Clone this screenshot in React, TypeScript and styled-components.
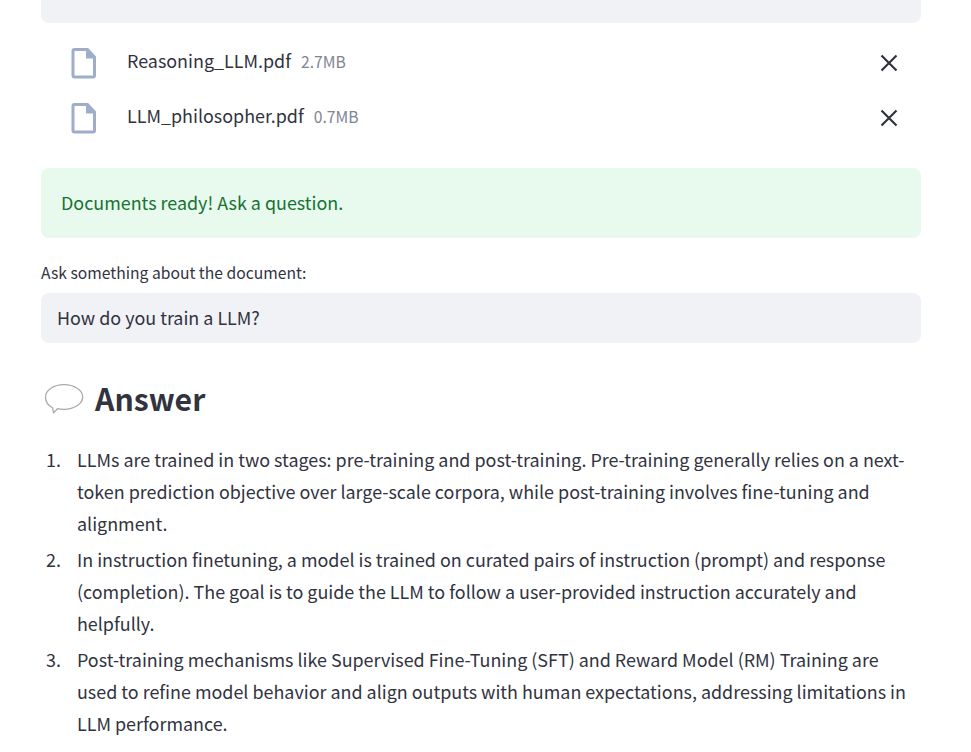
import { createGlobalStyle, styled } from 'styled-components';

const GlobalStyle = createGlobalStyle`
  html, body {
    margin: 0;
    padding: 0;
    background: #fff;
    overflow: hidden;
  }
  body {
    font-family: "Noto Sans CJK SC", "Noto Sans", sans-serif;
    color: #31333f;
  }
`;

const Page = styled.main`
  width: 971px;
  height: 752px;
  overflow: hidden;
  box-sizing: border-box;
  padding: 0 50px 0 41px;
`;

const DropZone = styled.div`
  height: 23px;
  background: #f0f2f6;
  border-radius: 0 0 8px 8px;
`;

const FileList = styled.div`
  display: flex;
  flex-direction: column;
  padding: 12px 0 0;
`;

const FileRow = styled.div`
  height: 55px;
  display: flex;
  align-items: center;
  padding-left: 30px;
`;

const FileIcon = styled.svg`
  width: 26px;
  height: 32px;
  flex: none;
  color: #9eadca;
`;

const FileName = styled.span`
  margin: -5px 0 0 30px;
  font-size: 17.92px;
  line-height: 28px;
`;

const FileSize = styled.span`
  margin: -1px 0 0 10px;
  font-size: 15.68px;
  line-height: 28px;
  color: #808495;
`;

const RemoveIcon = styled.svg`
  width: 24px;
  height: 24px;
  margin-left: auto;
  margin-right: 20px;
  flex: none;
`;

const Alert = styled.div`
  margin-top: 23px;
  height: 70px;
  display: flex;
  align-items: center;
  box-sizing: border-box;
  padding: 0 20px 2px;
  background: #e8f9ee;
  border-radius: 8px;
  color: #177233;
  font-size: 17.92px;
`;

const FieldLabel = styled.label`
  display: block;
  margin-top: 23px;
  height: 32px;
  font-size: 15.68px;
  line-height: 24px;
`;

const TextInput = styled.div`
  height: 50px;
  display: flex;
  align-items: center;
  box-sizing: border-box;
  padding: 0 16px 2px;
  background: #f0f2f6;
  border-radius: 8px;
  font-size: 17.92px;
`;

const Heading = styled.h3`
  margin: 29px 0 0;
  height: 52px;
  display: flex;
  align-items: center;
  font-size: 30.24px;
  line-height: 50px;
  font-weight: 600;
`;

const BubbleIcon = styled.svg`
  width: 40px;
  height: 32px;
  margin: 4px 11px 0 3px;
  flex: none;
`;

const AnswerList = styled.ol`
  margin: 19px 0 0;
  padding: 0;
  list-style: none;
  font-size: 17.92px;
  line-height: 32px;
`;

const AnswerItem = styled.li`
  display: grid;
  grid-template-columns: 36px 1fr;
  margin-bottom: 4px;
`;

const AnswerNumber = styled.span`
  padding-left: 5px;
`;

const files = [
  { name: 'Reasoning_LLM.pdf', size: '2.7MB' },
  { name: 'LLM_philosopher.pdf', size: '0.7MB' },
];

const answers = [
  'LLMs are trained in two stages: pre-training and post-training. Pre-training generally relies on a next-token prediction objective over large-scale corpora, while post-training involves fine-tuning and alignment.',
  'In instruction finetuning, a model is trained on curated pairs of instruction (prompt) and response (completion). The goal is to guide the LLM to follow a user-provided instruction accurately and helpfully.',
  'Post-training mechanisms like Supervised Fine-Tuning (SFT) and Reward Model (RM) Training are used to refine model behavior and align outputs with human expectations, addressing limitations in LLM performance.',
];

export default function App() {
  return (
    <Page>
      <GlobalStyle />
      <DropZone />
      <FileList>
        {files.map((file) => (
          <FileRow key={file.name}>
            <FileIcon viewBox="0 0 26 32" fill="none">
              <path d="M3.500 2.500h12.500l7.500 8v18a1.500 1.500 0 0 1-1.500 1.500H3.500a1.500 1.500 0 0 1-1.500-1.500V4a1.500 1.500 0 0 1 1.500-1.500z" stroke="currentColor" strokeWidth="3" strokeLinejoin="round" />
              <path d="M15 1h2l8 8.500v2H15z" fill="currentColor" />
            </FileIcon>
            <FileName>{file.name}</FileName>
            <FileSize>{file.size}</FileSize>
            <RemoveIcon viewBox="0 0 24 24" fill="none">
              <path d="M4.500 4.500l15 15M19.500 4.500l-15 15" stroke="#31333f" strokeWidth="2.200" />
            </RemoveIcon>
          </FileRow>
        ))}
      </FileList>
      <Alert>Documents ready! Ask a question.</Alert>
      <FieldLabel>Ask something about the document:</FieldLabel>
      <TextInput>How do you train a LLM?</TextInput>
      <Heading>
        <BubbleIcon viewBox="0 0 40 32" fill="none">
          <path d="M20 .7C30 .7 38.700 6 38.700 13C38.700 20 30 25.300 20 25.300C17 25.300 15 25 13.500 24.700L9.500 28.700L8.700 24C4 21.500 1.500 17.500 1.500 13C1.500 6 10 .7 20 .7Z" stroke="#aaa" strokeWidth="1.300" strokeLinejoin="round" />
        </BubbleIcon>
        Answer
      </Heading>
      <AnswerList>
        {answers.map((text, index) => (
          <AnswerItem key={text}>
            <AnswerNumber>{index + 1}.</AnswerNumber>
            <span>{text}</span>
          </AnswerItem>
        ))}
      </AnswerList>
    </Page>
  );
}
